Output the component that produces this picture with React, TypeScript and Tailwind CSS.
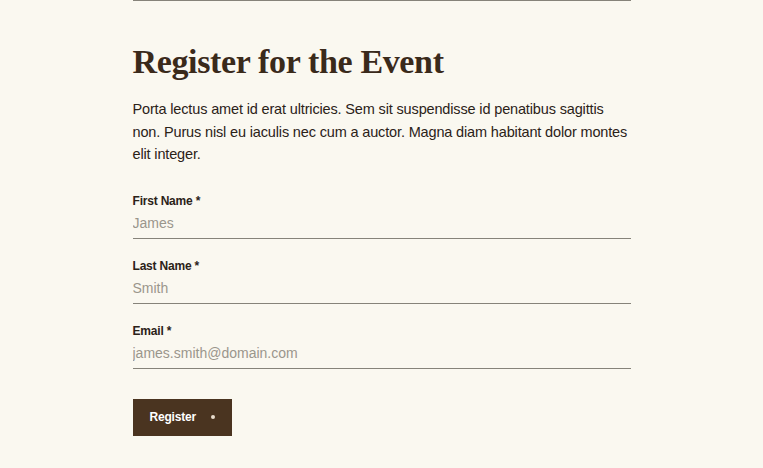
export default function App() {
  const fields = [
    { label: "First Name", placeholder: "James", type: "text" },
    { label: "Last Name", placeholder: "Smith", type: "text" },
    { label: "Email", placeholder: "james.smith@domain.com", type: "email" },
  ];

  return (
    <div className="min-h-[468px] w-full bg-[#faf8f0] font-['Liberation_Sans',sans-serif]">
      <div className="mx-auto w-[498px] border-t border-[#86837a] pt-[42px]">
        <h1 className="font-['Liberation_Serif',serif] text-[34px] font-bold leading-[38px] tracking-[-0.35px] text-[#3a2a1b]">
          Register for the Event
        </h1>
        <p className="mt-[17px] text-[14.5px] leading-[22.5px] tracking-[-0.15px] text-[#2b2218]">
          Porta lectus amet id erat ultricies. Sem sit suspendisse id penatibus sagittis non. Purus nisl eu iaculis nec cum
          a auctor. Magna diam habitant dolor montes elit integer.
        </p>
        <form className="mt-[27px] flex flex-col gap-[19px]" onSubmit={(e) => e.preventDefault()}>
          {fields.map((field) => (
            <label key={field.label} className="flex flex-col">
              <span className="text-[12px] font-bold leading-[16px] tracking-[-0.2px] text-[#2b2218]">
                {field.label} *
              </span>
              <input
                type={field.type}
                placeholder={field.placeholder}
                className="h-[30px] border-b border-[#86837a] bg-transparent pb-[1px] text-[14px] text-[#2b2218] outline-none placeholder:text-[#9a968c]"
              />
            </label>
          ))}
          <div className="mt-[11px]">
            <button
              type="submit"
              className="flex h-[37px] w-[99px] items-center gap-[15px] bg-[#4a3420] pl-[17px] text-[12px] font-bold tracking-[-0.2px] text-white"
            >
              Register
              <span className="size-[4px] rounded-full bg-[#e8dccd]" />
            </button>
          </div>
        </form>
      </div>
    </div>
  );
}
